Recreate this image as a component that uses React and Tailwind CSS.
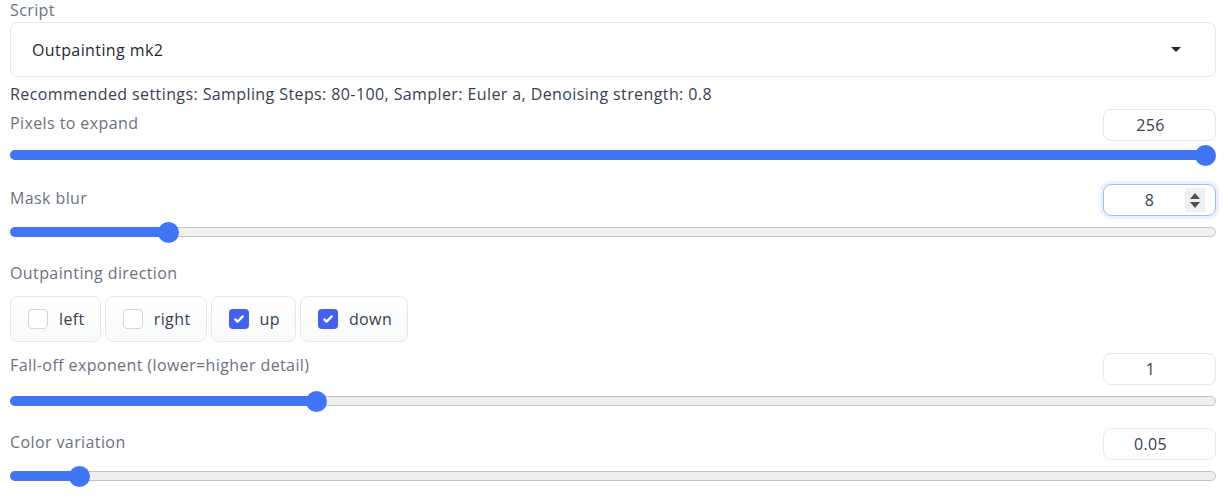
import React from 'react';

const font = { fontFamily: '"Open Sans", "Noto Sans", sans-serif' };

const Slider = ({ pct, className = '' }) => (
  <div className={`relative h-[21px] mx-[10px] ${className}`}>
    <div className="absolute left-0 right-0 top-[5px] h-[10px] rounded-full bg-[#efefef] border border-[#c4c4c4]"></div>
    <div
      className="absolute left-0 top-[5px] h-[10px] rounded-full bg-[#4076f6]"
      style={{ width: `calc(${pct} * (100% - 21px) + 11px)` }}
    ></div>
    <div
      className="absolute top-0 w-[21px] h-[21px] rounded-full bg-[#4076f6]"
      style={{ left: `calc(${pct} * (100% - 21px))` }}
    ></div>
  </div>
);

const NumberBox = ({ value, focused }) =>
  focused ? (
    <div className="w-[113px] h-[32px] rounded-[8px] border border-[#93c5fd] ring-[3px] ring-[#eaf2ff] bg-white flex items-center pl-[10px] pr-[10px] text-[16px] text-[#374151]">
      <span className="flex-1 text-center">{value}</span>
      <span className="w-[20px] h-[24px] bg-[#efefef] flex flex-col items-center justify-center gap-[3px]">
        <span className="w-0 h-0 border-l-[5px] border-r-[5px] border-b-[6px] border-l-transparent border-r-transparent border-b-[#505050]"></span>
        <span className="w-0 h-0 border-l-[5px] border-r-[5px] border-t-[6px] border-l-transparent border-r-transparent border-t-[#505050]"></span>
      </span>
    </div>
  ) : (
    <div className="w-[113px] h-[32px] rounded-[8px] border border-[#e5e7eb] bg-white flex items-center justify-center pr-[18px] text-[16px] text-[#374151]">
      {value}
    </div>
  );

const SliderRow = ({ label, value, focused, labelMt = 'mt-[4px]', className = '' }) => (
  <div className={`flex justify-between items-start px-[10px] pr-[15px] ${className}`}>
    <div className={`text-[16px] leading-5 text-[#6b7280] ${labelMt}`}>{label}</div>
    <NumberBox value={value} focused={focused} />
  </div>
);

const Check = ({ label, checked }) => (
  <label className="flex items-center h-[46px] pl-[17px] pr-[15px] rounded-[8px] border border-[#e5e7eb] bg-gradient-to-b from-white to-[#f9fafb] text-[16px] text-[#374151] gap-[11px]">
    {checked ? (
      <span className="w-[20px] h-[20px] rounded-[4px] bg-[#4361ee] flex items-center justify-center">
        <svg viewBox="0 0 16 16" className="w-[12px] h-[12px]" fill="none" stroke="white" strokeWidth="3" strokeLinecap="round" strokeLinejoin="round">
          <path d="M3 8.5l3 3 7-7" />
        </svg>
      </span>
    ) : (
      <span className="w-[20px] h-[20px] rounded-[4px] bg-white border border-[#d1d5db]"></span>
    )}
    <span>{label}</span>
  </label>
);

export default function App() {
  return (
    <div className="w-[1231px] h-[500px] bg-white overflow-hidden tracking-[0.4px]" style={font}>
      <div className="px-[10px] pr-[15px]">
        <div className="text-[16px] leading-5 text-[#6b7280]">Script</div>
        <div className="mt-[2px] h-[55px] rounded-[8px] border border-[#e5e7eb] bg-white flex items-center justify-between pl-[21px] pr-[34px]">
          <span className="text-[16px] text-[#1f2937]">Outpainting mk2</span>
          <span className="w-0 h-0 border-l-[5px] border-r-[5px] border-t-[5px] border-l-transparent border-r-transparent border-t-[#1f2937]"></span>
        </div>
        <div className="mt-[7px] text-[16px] leading-5 text-[#374151]">
          Recommended settings: Sampling Steps: 80-100, Sampler: Euler a, Denoising strength: 0.8
        </div>
      </div>

      <SliderRow label="Pixels to expand" value="256" className="mt-[5px]" />
      <Slider pct={1} className="mt-[4px] mr-[15px]" />

      <SliderRow label="Mask blur" value="8" focused className="mt-[18px]" />
      <Slider pct={0.125} className="mt-[6px] mr-[15px]" />

      <div className="px-[10px] pr-[15px]">
        <div className="mt-[20px] text-[16px] leading-5 text-[#6b7280]">Outpainting direction</div>
        <div className="mt-[13px] flex gap-[4px]">
          <Check label="left" />
          <Check label="right" />
          <Check label="up" checked />
          <Check label="down" checked />
        </div>
      </div>

      <SliderRow label="Fall-off exponent (lower=higher detail)" value="1" labelMt="mt-[2px]" className="mt-[11px]" />
      <Slider pct={0.25} className="mt-[6px] mr-[15px]" />

      <SliderRow label="Color variation" value="0.05" className="mt-[16px]" />
      <Slider pct={0.05} className="mt-[6px] mr-[15px]" />
    </div>
  );
}
